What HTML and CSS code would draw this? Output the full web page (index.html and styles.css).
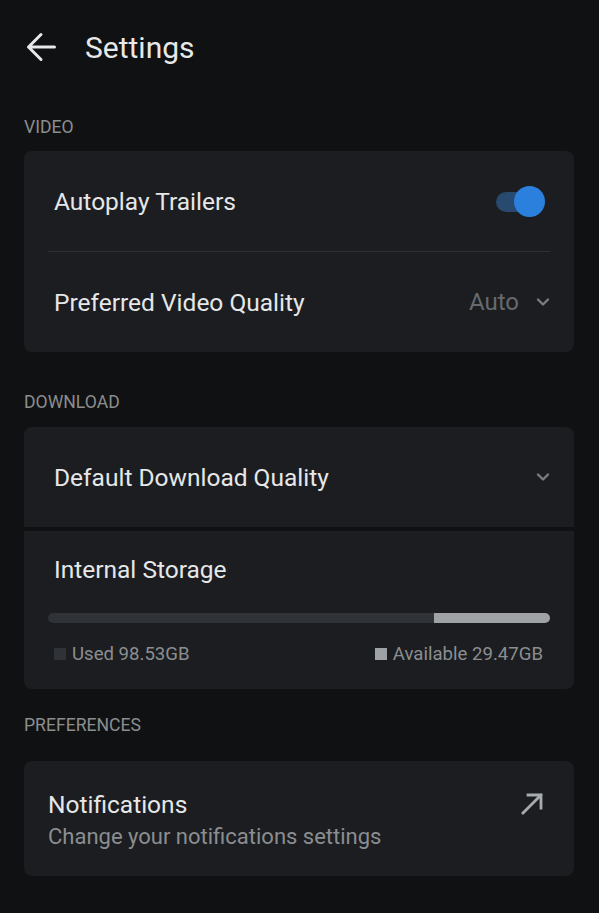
FILE: index.html
```html
<!DOCTYPE html>
<html lang="en">
<head>
    <meta charset="UTF-8">
    <meta name="viewport" content="width=device-width, initial-scale=1.0">
    <title>Settings</title>
    <link rel="stylesheet" href="styles.css">
</head>
<body>
    <header class="topbar">
        <svg class="back" width="30" height="30" viewBox="0 0 30 30">
            <path d="M28.5 15H2.5M15 2.5L2.5 15 15 27.5" fill="none" stroke="#e8e8e8" stroke-width="3" stroke-linecap="round" stroke-linejoin="round"/>
        </svg>
        <h1>Settings</h1>
    </header>

    <div class="section-label label-video">VIDEO</div>
    <div class="card">
        <div class="row">
            <span class="row-title">Autoplay Trailers</span>
            <div class="toggle">
                <div class="track"></div>
                <div class="thumb"></div>
            </div>
        </div>
        <div class="divider"></div>
        <div class="row">
            <span class="row-title">Preferred Video Quality</span>
            <div class="select">
                <span class="select-value">Auto</span>
                <svg class="chevron" width="14" height="14" viewBox="0 0 14 14">
                    <path d="M2 4.5l5 5 5-5" fill="none" stroke="#7a7d80" stroke-width="2.4" stroke-linecap="round" stroke-linejoin="round"/>
                </svg>
            </div>
        </div>
    </div>

    <div class="section-label label-download">DOWNLOAD</div>
    <div class="card card-top">
        <div class="row">
            <span class="row-title">Default Download Quality</span>
            <svg class="chevron" width="14" height="14" viewBox="0 0 14 14">
                <path d="M2 4.5l5 5 5-5" fill="none" stroke="#7a7d80" stroke-width="2.4" stroke-linecap="round" stroke-linejoin="round"/>
            </svg>
        </div>
    </div>
    <div class="card card-bottom storage">
        <div class="row-title">Internal Storage</div>
        <div class="bar">
            <div class="bar-used" style="width: 76.9%;"></div>
            <div class="bar-free"></div>
        </div>
        <div class="legend">
            <span class="legend-item"><i class="swatch used"></i>Used 98.53GB</span>
            <span class="legend-item"><i class="swatch free"></i>Available 29.47GB</span>
        </div>
    </div>

    <div class="section-label label-prefs">PREFERENCES</div>
    <div class="card link-card">
        <div>
            <div class="row-title">Notifications</div>
            <div class="row-sub">Change your notifications settings</div>
        </div>
        <svg class="open" width="24" height="24" viewBox="0 0 24 24">
            <path d="M3 21L21 3M8 3h13v13" fill="none" stroke="#a8abae" stroke-width="2.8" stroke-linecap="square"/>
        </svg>
    </div>
</body>
</html>
```

FILE: styles.css
```css
body {
    margin: 0;
    background-color: #101112;
    font-family: Roboto, "Noto Sans", sans-serif;
    color: #e6e7e8;
    padding: 0 25px 0 24px;
}

.topbar {
    display: flex;
    align-items: center;
    height: 94px;
}

.back {
    margin-left: 2px;
    margin-right: 29px;
}

h1 {
    margin: 0;
    font-size: 30px;
    font-weight: 400;
    color: #e8e8e8;
}

.section-label {
    font-size: 17.6px;
    color: #8b8d8f;
    line-height: 20px;
}

.label-video {
    margin-top: 23px;
    margin-bottom: 14px;
}

.label-download {
    margin-top: 40px;
    margin-bottom: 15px;
}

.label-prefs {
    margin-top: 26px;
    margin-bottom: 26px;
}

.card {
    background-color: #1b1d20;
    border-radius: 8px;
}

.card-top {
    border-radius: 8px 8px 0 0;
}

.card-bottom {
    border-radius: 0 0 8px 8px;
    margin-top: 4px;
}

.row {
    display: flex;
    align-items: center;
    justify-content: space-between;
    height: 100px;
    padding: 0 25px 0 30px;
}

.row-title {
    font-size: 24.5px;
    line-height: 29px;
}

.divider {
    height: 1px;
    background-color: #2e3134;
    margin: 0 24px;
}

.toggle {
    position: relative;
    width: 49px;
    height: 31px;
    margin-right: 4px;
}

.track {
    position: absolute;
    left: 0;
    top: 6px;
    width: 44px;
    height: 20px;
    border-radius: 10px;
    background-color: #274a6e;
}

.thumb {
    position: absolute;
    right: 0;
    top: 0;
    width: 31px;
    height: 31px;
    border-radius: 50%;
    background-color: #2b80de;
}

.select {
    display: flex;
    align-items: center;
    gap: 17px;
}

.select-value {
    font-size: 24px;
    color: #66696d;
}

.chevron {
    margin-right: -1px;
}

.storage {
    padding: 24px 24px 24px 24px;
}

.storage .row-title {
    padding-left: 6px;
}

.bar {
    display: flex;
    height: 10px;
    margin-top: 29px;
    border-radius: 5px;
    overflow: hidden;
}

.bar-used {
    background-color: #2f3236;
}

.bar-free {
    flex: 1;
    background-color: #9ea2a5;
}

.legend {
    display: flex;
    justify-content: space-between;
    margin-top: 20px;
    padding: 0 7px 0 6px;
    font-size: 18.6px;
    line-height: 22px;
    color: #8b8e91;
}

.legend-item {
    display: flex;
    align-items: center;
}

.swatch {
    display: inline-block;
    width: 12px;
    height: 12px;
    margin-right: 6px;
}

.swatch.used {
    background-color: #2f3236;
}

.swatch.free {
    background-color: #9ea2a5;
}

.link-card {
    display: flex;
    justify-content: space-between;
    align-items: flex-start;
    padding: 29px 30px 26px 24px;
}

.link-card .row-sub {
    font-size: 22px;
    line-height: 26px;
    color: #8b8e91;
    margin-top: 5px;
}

.open {
    margin-top: 2px;
}
```
